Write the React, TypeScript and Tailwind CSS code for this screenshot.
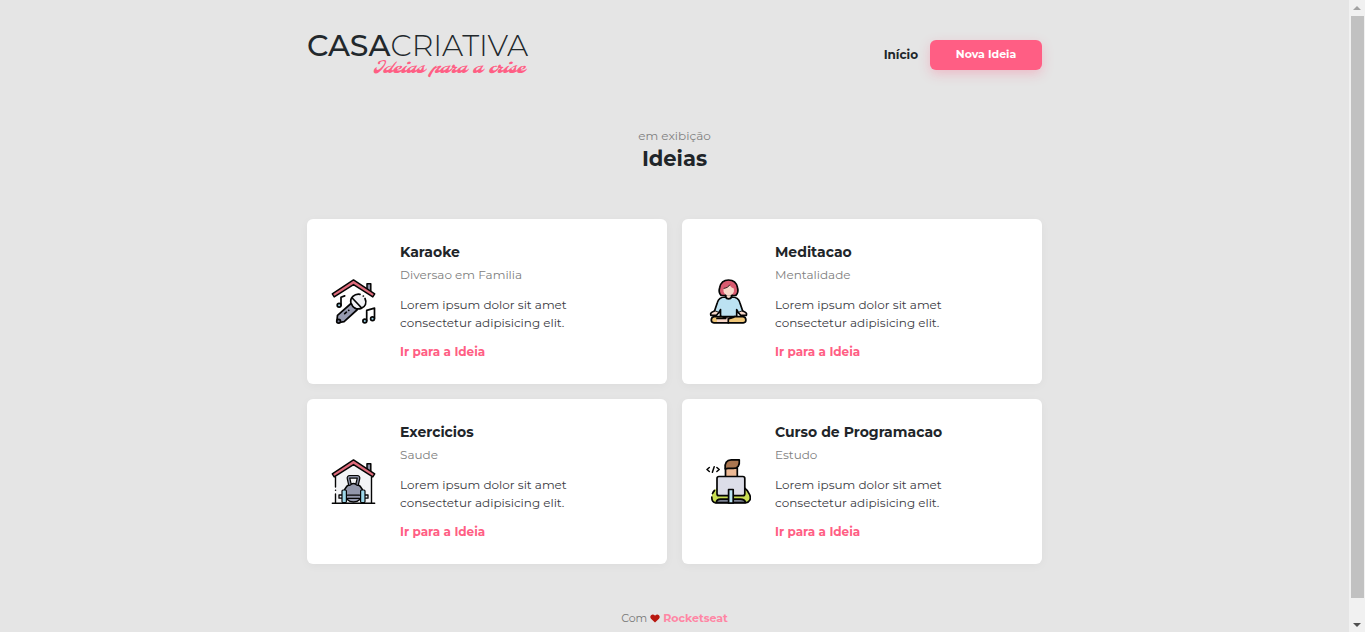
import type { ReactNode } from "react";

const stroke = {
  stroke: "#050505",
  strokeWidth: 1.7,
  strokeLinecap: "round" as const,
  strokeLinejoin: "round" as const,
};

function IconFrame({ children }: { children: ReactNode }) {
  return (
    <svg viewBox="6 9 45 45" className="size-[45px] shrink-0" fill="none" aria-hidden="true" {...stroke}>
      {children}
    </svg>
  );
}

function Roof() {
  return (
    <>
      <path d="M42 19v-5.2h3.8v8.6" fill="#8a8fa3" strokeWidth="1.5" />
      <path d="M28.5 9.9 49.7 23.8 47.8 26.9 28.5 14.6 9.2 26.9 7.3 23.8Z" fill="#df6b7b" strokeWidth="1.5" />
    </>
  );
}

function KaraokeIcon() {
  return (
    <IconFrame>
      <Roof />
      <path d="M26 33.5 12.5 45.4 12 50l2.5 2.5 4.6-.8L32.4 39.5Z" fill="#979bb0" />
      <circle cx="13.6" cy="51.2" r="1.9" fill="#777e96" />
      <circle cx="33.3" cy="31.3" r="7" fill="#f1f2f6" stroke="none" />
      <path d="M35 24.3c-5.5-1-10.5 3.8-9 8.8 1.6 4.8 5.6 6.9 10.2 5.3 4.2-1.5 5.9-5.7 3.8-9.9M27.2 28l9.500 10M38.3 26h.1" />
      <path d="m19.7 43.7 1.7-1.5M23.7 40.3h.1" />
      <path d="M16 35.2v-8l3.7-1.3M41.7 50.7V40.4l7.8-2.3v10.2" />
      <circle cx="14.1" cy="35.3" r="1.9" fill="#9ed5e8" />
      <circle cx="39.8" cy="51" r="1.9" fill="#9ed5e8" />
      <circle cx="47.5" cy="48.8" r="1.9" fill="#9ed5e8" />
    </IconFrame>
  );
}

function MeditationIcon() {
  return (
    <IconFrame>
      <path d="M21.2 25.5c-2.2-2-2.5-4.8-1.5-8 1-4.8 4.3-7.5 8.800-7.5s8 2.7 9 7.5c.9 3.4.5 6-1.7 8Z" fill="#d85b70" />
      <path d="M25.8 24.5h5.7v3.2c-.7 1.8-5 1.8-5.7 0Z" fill="#f8d7c9" />
      <path d="M23.5 18.4c3-.4 5-1.6 6.2-3.4 1 2 2.2 3 4.2 3.4v3.2c-1.3 5.3-9 5.3-10.4 0Z" fill="#f8d7c9" stroke="none" />
      <path d="M24 18.4c2.7-.4 4.6-1.6 5.7-3.4" strokeWidth="0.8" />
      <path d="M25.4 27c-4.8 0-7 1.5-8 5.4L14.5 41l4.2 1.8 1.8-3.2v7.1h16.2v-7.1l1.8 3.2 4.2-1.8-2.9-8.6c-1-3.9-3.2-5.4-8-5.4-1.4 2.5-5 2.5-6.4 0Z" fill="#bce2f2" />
      <path d="M14.5 41c-3 .9-4.5 2.3-3.7 4.3h5.7l2.2-2.5M42.7 41c3 .9 4.5 2.3 3.7 4.3h-5.7l-2.2-2.5" fill="#f8d7c9" />
      <path d="M14 46.7c-3.2.7-4 5.6 0 6.2h29.2c4-.6 3.2-5.5 0-6.2H34l-6 1.8-6-1.8Z" fill="#f0c779" />
      <path d="M17 48.3h11.2v3.7H17Z" fill="#f8d7c9" stroke="none" />
      <path d="M17 48.4h8.500M28.3 52.8V49l5.5-1.8" />
    </IconFrame>
  );
}

function ExerciseIcon() {
  return (
    <IconFrame>
      <path d="M10.5 25.5 28.5 14l18 11.5v27.8h-36Z" fill="#f3f4f6" stroke="none" />
      <Roof />
      <path d="M7.3 53.2h42.4M10.5 27v10M10.5 40.2h.1M10.5 44v9M46.5 27v26" strokeWidth="1.4" />
      <path d="M14 45h29v3.2H14Z" fill="#eceef3" strokeWidth="1.3" />
      <circle cx="28.5" cy="42.700" r="9.300" fill="#9297ab" strokeWidth="1.5" />
      <path d="m24.8 34-1.300-5.600c-.2-.9.3-1.600 1.200-1.600h7.600c.9 0 1.400.7 1.200 1.600L32.200 34" stroke="#050505" strokeWidth="3.800" />
      <path d="m24.8 34-1.300-5.600c-.2-.9.3-1.600 1.200-1.600h7.600c.9 0 1.400.7 1.200 1.600L32.200 34" stroke="#8a8fa3" strokeWidth="1.400" />
      <path d="M22.500 45.200h12M22.500 48.400h12" strokeWidth="1.2" />
      <rect x="17" y="40" width="4.4" height="12.6" rx="1" fill="#9dd8ea" strokeWidth="1.2" />
      <rect x="35.6" y="40" width="4.4" height="12.6" rx="1" fill="#9dd8ea" strokeWidth="1.2" />
    </IconFrame>
  );
}

function ProgrammingIcon() {
  return (
    <IconFrame>
      <path d="M25.5 18h11.8v9H25.5Z" fill="#edb995" />
      <path d="M25.2 18.8c-.8-5.7 1.5-8.9 6-8.9h8.1c.6 5.4-1.4 8.5-6 8.5h-5.2Z" fill="#aa7650" />
      <path d="M16.8 38c-3.5 2.3-5 5.5-5 9 0 4 1.7 6 4.6 6h29c4.5-.5 5.8-4.2 4.2-8.2-1.1-3.2-3-5.6-5.6-6.8Z" fill="#c9de53" stroke="none" />
      <path d="M14.5 40.5c-1 .9-1.6 2-2 3M11.8 47.2c-.1 3.3 1.3 5.4 3.9 5.8h29.6c4.6-.5 6-4.2 4.4-8.2-1.2-3-2.8-5.3-5.2-6.8" />
      <path d="M16.2 52.5c.4-2.3 2-3.4 4.2-3.4h19.8c3 0 4.8 1 5.3 3.4Z" fill="#7c8293" />
      <rect x="17" y="26.5" width="27.8" height="19.2" rx="2" fill="#dcdde8" />
      <path d="M28.6 39.5h4.6V53h-4.6Z" fill="#bce5f4" />
      <path d="m9.3 17.5-2.3 2 2.3 2M16.9 17.5l2.3 2-2.3 2M14.2 16.8l-1.8 5.4" strokeWidth="1.5" />
    </IconFrame>
  );
}

const ideas = [
  { title: "Karaoke", category: "Diversao em Familia", Icon: KaraokeIcon },
  { title: "Meditacao", category: "Mentalidade", Icon: MeditationIcon },
  { title: "Exercicios", category: "Saude", Icon: ExerciseIcon },
  { title: "Curso de Programacao", category: "Estudo", Icon: ProgrammingIcon },
];

function Header() {
  return (
    <header className="flex h-[50px] items-center justify-between">
      <a href="#inicio" className="flex flex-col items-end text-[#22282c]">
        <span className="text-[30px] leading-7 font-light">
          <span className="font-medium">CASA</span>CRIATIVA
        </span>
        <span className="pr-1 font-['Molle','DejaVu_Serif',serif] text-[17px] leading-[18px] text-[#ff5e84] italic">
          Ideias para a crise
        </span>
      </a>
      <nav className="flex items-center gap-3">
        <a href="#inicio" className="text-[12px] font-bold text-[#212529]">
          Início
        </a>
        <button
          type="button"
          className="h-[30px] w-28 rounded-md bg-[#ff5e84] pb-px text-[11px] font-bold text-white shadow-[0_4px_12px_rgba(255,94,132,0.3)]"
        >
          Nova Ideia
        </button>
      </nav>
    </header>
  );
}

function IdeaCard({ title, category, Icon }: (typeof ideas)[number]) {
  return (
    <article className="flex items-center gap-6 rounded-md bg-white px-6 py-[23px] shadow-[0_2px_10px_rgba(0,0,0,0.04)]">
      <Icon />
      <div className="text-[12px] leading-[18px]">
        <h3 className="text-[14px] leading-5 font-bold text-[#212529]">{title}</h3>
        <p className="mt-1 text-[#808080]">{category}</p>
        <p className="mt-3 text-[#3a3a42]">
          Lorem ipsum dolor sit amet
          <br />
          consectetur adipisicing elit.
        </p>
        <a href="#ideia" className="mt-[11px] block font-bold text-[#ff5e84]">
          Ir para a Ideia
        </a>
      </div>
    </article>
  );
}

function ScrollTrack() {
  return (
    <div className="flex w-4 shrink-0 flex-col items-center bg-[#f1f1f1]" aria-hidden="true">
      <svg viewBox="0 0 16 16" className="size-4 shrink-0">
        <path d="M4 10h8L8 6Z" fill="#a3a3a3" />
      </svg>
      <div className="w-[13px] flex-1 bg-[#c1c1c1]" />
      <svg viewBox="0 0 16 34" className="h-[34px] w-4 shrink-0">
        <path d="M4 25h8l-4 4Z" fill="#505050" />
      </svg>
    </div>
  );
}

export default function App() {
  return (
    <div className="flex h-screen bg-[#e5e5e5] font-['Montserrat','Inter',sans-serif]">
      <div className="flex-1 overflow-y-auto [scrollbar-width:none]">
        <div className="mx-auto max-w-[735px] pt-[30px] pb-8">
          <Header />
          <main>
            <div className="mt-[47px] text-center">
              <p className="text-[12px] leading-[18px] text-[#808080]">em exibição</p>
              <h1 className="text-[21px] leading-7 font-bold text-[#212529]">Ideias</h1>
            </div>
            <section className="mt-[46px] grid gap-[15px] sm:grid-cols-2">
              {ideas.map((idea) => (
                <IdeaCard key={idea.title} {...idea} />
              ))}
            </section>
          </main>
          <footer className="mt-[45px] flex items-center justify-center gap-[3px] text-[11px] leading-[18px] text-[#777777]">
            <span>Com</span>
            <svg viewBox="0 0 10 9" className="h-[9px] w-[10px]" role="img" aria-label="amor">
              <path d="M5 8.5 1 4.7C-.8 2.7 1.2.4 3 .6c1 .1 1.6.6 2 1.2C5.4 1.2 6 .7 7 .6c1.8-.2 3.8 2.1 2 4.1Z" fill="#b8170f" />
            </svg>
            <a href="#rocketseat" className="font-bold text-[#ff86a4]">
              Rocketseat
            </a>
          </footer>
        </div>
      </div>
      <ScrollTrack />
    </div>
  );
}
